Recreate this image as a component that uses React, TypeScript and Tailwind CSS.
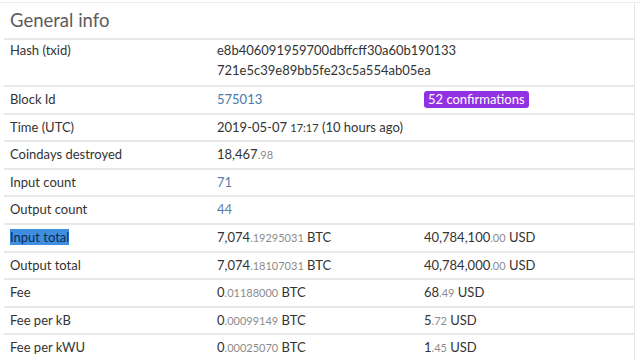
import React from 'react';

type Amount = { main: string; dec?: string; unit?: string };

const Num: React.FC<Amount> = ({ main, dec, unit }) => (
  <span>
    {main}
    {dec && <span className="text-[11px] text-[#8c8c8c]">{dec}</span>}
    {unit && <span> {unit}</span>}
  </span>
);

const rows: { label: string; value: React.ReactNode; extra?: React.ReactNode; selected?: boolean }[] = [
  {
    label: 'Block Id',
    value: <span className="text-[#4b78ab]">575013</span>,
    extra: (
      <span className="inline-block rounded-[3px] bg-[#9230e3] px-[4px] leading-[17px] text-white text-[13px]">
        52 confirmations
      </span>
    ),
  },
  {
    label: 'Time (UTC)',
    value: (
      <span>
        2019-05-07 <span className="text-[11px]">17:17</span> (10 hours ago)
      </span>
    ),
  },
  { label: 'Coindays destroyed', value: <Num main="18,467" dec=".98" /> },
  { label: 'Input count', value: <span className="text-[#5a80ab]">71</span> },
  { label: 'Output count', value: <span className="text-[#5a80ab]">44</span> },
  {
    label: 'Input total',
    selected: true,
    value: <Num main="7,074" dec=".19295031" unit="BTC" />,
    extra: <Num main="40,784,100" dec=".00" unit="USD" />,
  },
  {
    label: 'Output total',
    value: <Num main="7,074" dec=".18107031" unit="BTC" />,
    extra: <Num main="40,784,000" dec=".00" unit="USD" />,
  },
  {
    label: 'Fee',
    value: <Num main="0" dec=".01188000" unit="BTC" />,
    extra: <Num main="68" dec=".49" unit="USD" />,
  },
  {
    label: 'Fee per kB',
    value: <Num main="0" dec=".00099149" unit="BTC" />,
    extra: <Num main="5" dec=".72" unit="USD" />,
  },
  {
    label: 'Fee per kWU',
    value: <Num main="0" dec=".00025070" unit="BTC" />,
    extra: <Num main="1" dec=".45" unit="USD" />,
  },
];

const App: React.FC = () => {
  return (
    <div
      className="w-[640px] h-[360px] overflow-hidden bg-white pt-[2px]"
      style={{ fontFamily: 'Lato, "Open Sans", sans-serif' }}
    >
      <div className="border-t border-[#ececec]">
        <div className="ml-[4px] w-[631px] border-r border-[#e6e6e6]">
          <div className="h-[35px] flex items-center pl-[6px] text-[18.5px] text-[#5c5c5c]">
            General info
          </div>

          <div className="text-[13px] text-[#333]">
            {/* hash row */}
            <div className="grid grid-cols-[207px_207px_1fr] border-t-2 border-[#e8e8e8] pl-[6px] pt-0 pb-[5px] leading-[20px]">
              <div>Hash (txid)</div>
              <div className="col-span-2">
                <div>e8b406091959700dbffcff30a60b190133</div>
                <div>721e5c39e89bb5fe23c5a554ab05ea</div>
              </div>
            </div>

            {rows.map((row) => (
              <div
                key={row.label}
                className="grid grid-cols-[207px_207px_1fr] items-center h-[27.6px] border-t-2 border-[#e8e8e8] pl-[6px]"
              >
                <div>
                  {row.selected ? (
                    <span className="bg-[#3f8ee0] text-[#0f2a55]">{row.label}</span>
                  ) : (
                    row.label
                  )}
                </div>
                <div>{row.value}</div>
                <div>{row.extra}</div>
              </div>
            ))}
          </div>
        </div>
      </div>
    </div>
  );
};

export default App;
